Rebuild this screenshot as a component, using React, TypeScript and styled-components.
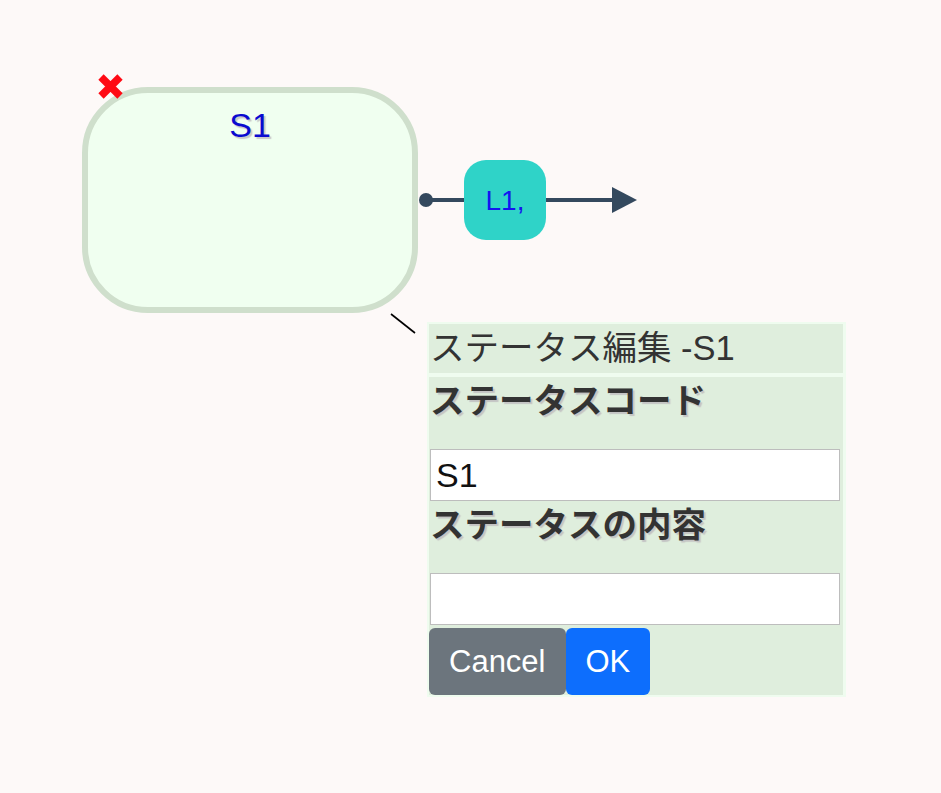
import React from "react";
import styled, { createGlobalStyle } from "styled-components";

const GlobalStyle = createGlobalStyle`
  html, body {
    margin: 0;
    padding: 0;
    background: #fdf9f8;
  }
  body {
    font-family: "Liberation Sans", "Noto Sans CJK JP", sans-serif;
  }
`;

const Canvas = styled.div`
  position: relative;
  width: 941px;
  height: 793px;
  overflow: hidden;
  background: #fdf9f8;
`;

const StateNode = styled.div<{ $x: number; $y: number }>`
  position: absolute;
  left: ${(p) => p.$x}px;
  top: ${(p) => p.$y}px;
  width: 336px;
  height: 226px;
  box-sizing: border-box;
  border: 6px solid #cfdfcc;
  border-radius: 66px;
  background: #f0fff0;
  display: flex;
  justify-content: center;
  padding-top: 13px;
`;

const StateName = styled.div`
  font-family: "Liberation Sans", "Noto Sans CJK JP", sans-serif;
  font-size: 34px;
  line-height: 38px;
  height: 38px;
  color: #0a0ad0;
  text-shadow: 2px 2px 1px #c8c8c8;
`;

const DeleteMark = styled.svg<{ $x: number; $y: number }>`
  position: absolute;
  left: ${(p) => p.$x}px;
  top: ${(p) => p.$y}px;
`;

const Connector = styled.svg<{ $x: number; $y: number }>`
  position: absolute;
  left: ${(p) => p.$x}px;
  top: ${(p) => p.$y}px;
`;

const LinkBadge = styled.div<{ $x: number; $y: number }>`
  position: absolute;
  left: ${(p) => p.$x}px;
  top: ${(p) => p.$y}px;
  width: 82px;
  height: 80px;
  border-radius: 22px;
  background: #2fd3c8;
  display: flex;
  align-items: center;
  justify-content: center;
  font-family: "Liberation Sans", "Noto Sans CJK JP", sans-serif;
  font-size: 28px;
  color: #1414f0;
  padding-top: 2px;
  box-sizing: border-box;
`;

const EditorPanel = styled.div<{ $x: number; $y: number }>`
  position: absolute;
  left: ${(p) => p.$x}px;
  top: ${(p) => p.$y}px;
  width: 414px;
  padding: 2px 3px 2px 2px;
  background: #effcef;
  display: flex;
  flex-direction: column;
  gap: 4px;
  font-family: "Liberation Sans", "Noto Sans CJK JP", sans-serif;
  color: #333;
`;

const TitleCell = styled.div`
  background: #dfeedd;
  height: 49px;
  line-height: 49px;
  font-size: 34.5px;
  padding-left: 1px;
  white-space: nowrap;
`;

const BodyCell = styled.div`
  background: #dfeedd;
  display: flex;
  flex-direction: column;
`;

const FieldLabel = styled.div`
  height: 72px;
  box-sizing: border-box;
  padding-top: 4px;
  padding-left: 1px;
  font-size: 34.5px;
  line-height: 41px;
  font-weight: bold;
  color: #333;
  text-shadow: 2px 2px 1px #c4c4c4;
  white-space: nowrap;
`;

const TextInput = styled.input`
  display: block;
  box-sizing: border-box;
  width: 410px;
  height: 52px;
  margin: 0 0 0 1px;
  padding: 0 5px;
  border: 1px solid #bdbdbd;
  background: #ffffff;
  font-family: "Liberation Sans", "Noto Sans CJK JP", sans-serif;
  font-size: 34px;
  color: #111;
  outline: none;
`;

const ButtonRow = styled.div`
  display: flex;
  margin-top: 3px;
`;

const ActionButton = styled.button<{ $variant: "secondary" | "primary" }>`
  height: 67px;
  padding: 0 20px;
  border: none;
  border-radius: 6px;
  background: ${(p) => (p.$variant === "primary" ? "#0d6efd" : "#6c757d")};
  color: #ffffff;
  font-family: "Liberation Sans", "Noto Sans CJK JP", sans-serif;
  font-size: 31px;
  line-height: 45px;
  cursor: pointer;
`;

const LeaderLine = styled.svg<{ $x: number; $y: number }>`
  position: absolute;
  left: ${(p) => p.$x}px;
  top: ${(p) => p.$y}px;
`;

export default function App() {
  return (
    <>
      <GlobalStyle />
      <Canvas>
        <StateNode $x={82} $y={87}>
          <StateName>S1</StateName>
        </StateNode>
        <DeleteMark $x={96} $y={72} width={29} height={29} viewBox="0 0 29 29">
          <path d="M5 5 L24 24 M24 5 L5 24" stroke="#ff0a14" strokeWidth={7.5} strokeLinecap="butt" />
        </DeleteMark>
        <Connector $x={410} $y={180} width={240} height={40} viewBox="0 0 240 40">
          <line x1={16} y1={20} x2={204} y2={20} stroke="#34495e" strokeWidth={4} />
          <circle cx={16} cy={20} r={7} fill="#34495e" />
          <polygon points="202,7 227,20 202,33" fill="#34495e" />
        </Connector>
        <LinkBadge $x={464} $y={160}>L1,</LinkBadge>
        <LeaderLine $x={388} $y={311} width={30} height={26} viewBox="0 0 30 26">
          <line x1={3} y1={3} x2={27} y2={22} stroke="#000" strokeWidth={1.6} />
        </LeaderLine>
        <EditorPanel $x={427} $y={322}>
          <TitleCell>ステータス編集 -S1</TitleCell>
          <BodyCell>
            <FieldLabel>ステータスコード</FieldLabel>
            <TextInput defaultValue="S1" />
            <FieldLabel>ステータスの内容</FieldLabel>
            <TextInput defaultValue="" />
            <ButtonRow>
              <ActionButton $variant="secondary">Cancel</ActionButton>
              <ActionButton $variant="primary">OK</ActionButton>
            </ButtonRow>
          </BodyCell>
        </EditorPanel>
      </Canvas>
    </>
  );
}
